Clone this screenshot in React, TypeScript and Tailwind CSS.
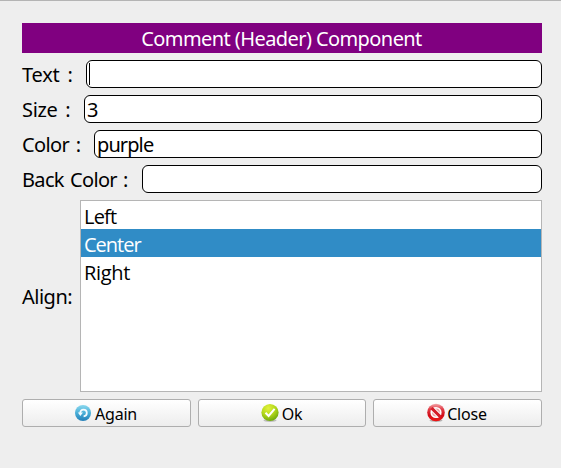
import type { ReactNode } from "react";

type FieldProps = {
  label: string;
  value?: string;
  labelClass: string;
  focused?: boolean;
};

function Field({ label, value = "", labelClass, focused }: FieldProps) {
  return (
    <div className="flex h-7 items-center">
      <span className={`shrink-0 whitespace-pre pt-px leading-[29px] ${labelClass}`}>{label}</span>
      <div className="flex h-7 min-w-0 flex-1 items-center rounded-[6px] border border-black bg-white pl-[2px]">
        {focused && <span className="h-[22px] w-px bg-black" />}
        <span className="pt-px leading-[27px] tracking-[-0.9px]">{value}</span>
      </div>
    </div>
  );
}

function AgainIcon() {
  return (
    <svg width="18" height="18" viewBox="0 0 18 18" className="shrink-0">
      <defs>
        <linearGradient id="again" x1="0" y1="0" x2="0" y2="1">
          <stop offset="0" stopColor="#8bd8ee" />
          <stop offset="0.5" stopColor="#49afd8" />
          <stop offset="1" stopColor="#247fb8" />
        </linearGradient>
      </defs>
      <circle cx="9" cy="9" r="8" fill="url(#again)" />
      <path d="M6.2 9.2C6.2 7 7.5 5.6 9.4 5.6C11.4 5.6 12.8 7.1 12.8 9C12.8 10.8 11.5 12.1 9.6 12.3" fill="none" stroke="#f4fbff" strokeWidth="1.8" />
      <path d="M3.8 8.6H9L6.4 12Z" fill="#f4fbff" />
    </svg>
  );
}

function OkIcon() {
  return (
    <svg width="20" height="20" viewBox="0 0 20 20" className="shrink-0">
      <defs>
        <radialGradient id="ok" cx="0.4" cy="0.25" r="0.8">
          <stop offset="0" stopColor="#e3f13c" />
          <stop offset="0.5" stopColor="#b4d91b" />
          <stop offset="1" stopColor="#67a30a" />
        </radialGradient>
      </defs>
      <ellipse cx="10" cy="17.4" rx="6.5" ry="1.6" fill="#808080" opacity="0.45" />
      <circle cx="10" cy="9.5" r="8.6" fill="url(#ok)" />
      <path d="M5.5 9.8L8.6 12.9L14.6 5.8" fill="none" stroke="#fff" strokeWidth="2" />
    </svg>
  );
}

function CloseIcon() {
  return (
    <svg width="20" height="20" viewBox="0 0 20 20" className="shrink-0">
      <defs>
        <linearGradient id="close" x1="0" y1="0" x2="0" y2="1">
          <stop offset="0" stopColor="#f3a6aa" />
          <stop offset="0.3" stopColor="#e2404a" />
          <stop offset="0.65" stopColor="#d20d18" />
          <stop offset="1" stopColor="#ee1717" />
        </linearGradient>
      </defs>
      <ellipse cx="10" cy="17.5" rx="6.5" ry="1.5" fill="#777" opacity="0.5" />
      <circle cx="10" cy="9.5" r="8.8" fill="url(#close)" />
      <circle cx="10" cy="9.5" r="4.8" fill="#eca0a5" stroke="#fff" strokeWidth="1.6" />
      <path d="M6.4 5.9L13.6 13.1" stroke="#fff" strokeWidth="5" />
      <path d="M5.6 5.1L14.4 13.9" stroke="#d51c28" strokeWidth="3" />
    </svg>
  );
}

function Button({ icon, gap, children }: { icon: ReactNode; gap: string; children: string }) {
  return (
    <button className={`flex h-7 items-center justify-center rounded-[3px] border border-[#aeaeae] bg-linear-to-b from-white to-[#ededed] pr-[2px] text-[16px] leading-none tracking-[-0.2px] ${gap}`}>
      {icon}
      <span className="relative top-px">{children}</span>
    </button>
  );
}

export default function App() {
  return (
    <main className="h-[468px] w-[561px] border-t border-[#b4b4b4] bg-[#eeeeee] pr-[19px] pl-[22px] pt-[22px] font-['Noto_Sans',sans-serif] text-[20px] text-black">
      <div className="flex flex-col gap-[7px]">
        <h1 className="h-[30px] bg-[#800080] pr-px text-center leading-[31px] tracking-[-0.58px] text-white">Comment (Header) Component</h1>
        <Field label="Text : " labelClass="w-16 tracking-[-0.2px] [word-spacing:3px]" focused />
        <Field label="Size : " value="3" labelClass="w-[62px] tracking-[-0.35px] [word-spacing:3px]" />
        <Field label="Color : " value="purple" labelClass="w-[72px] tracking-[-0.6px] [word-spacing:2px]" />
        <Field label="Back Color : " labelClass="w-[120px] tracking-[-0.65px] [word-spacing:1.5px]" />
        <div className="flex h-[192px] items-center">
          <span className="w-[58px] shrink-0 pt-[2px] tracking-[-0.5px]">Align:</span>
          <ul className="h-full flex-1 border border-[#b5b5b5] bg-white font-['Open_Sans',sans-serif] leading-[32px]">
            <li className="h-7 pl-[3px] tracking-[-0.8px]">Left</li>
            <li className="h-7 bg-[#308cc6] pl-[3px] tracking-[-1px] text-white">Center</li>
            <li className="h-7 pl-[3px] tracking-[-0.3px]">Right</li>
          </ul>
        </div>
        <div className="grid grid-cols-[169px_168px_169px] gap-[7px]">
          <Button icon={<AgainIcon />} gap="gap-[3px]">Again</Button>
          <Button icon={<OkIcon />} gap="gap-[2px]">Ok</Button>
          <Button icon={<CloseIcon />} gap="gap-[1px]">Close</Button>
        </div>
      </div>
    </main>
  );
}
